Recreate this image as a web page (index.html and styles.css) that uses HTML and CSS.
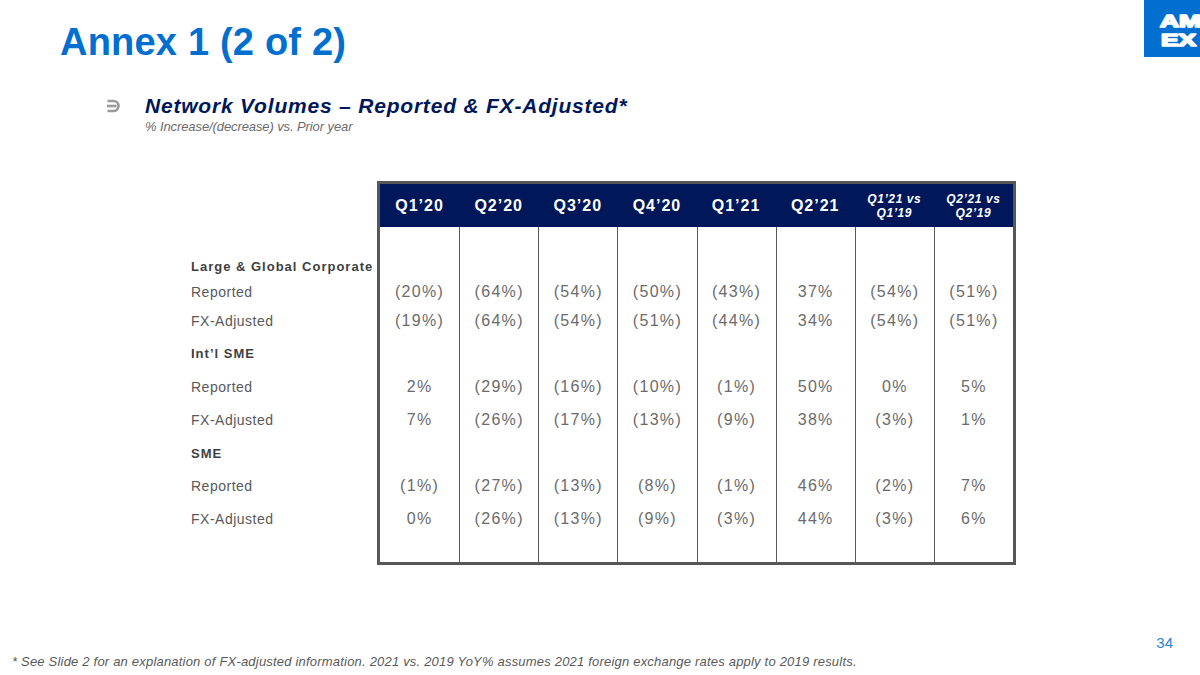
FILE: index.html
```html
<!DOCTYPE html>
<html>
<head>
<meta charset="utf-8">
<link rel="stylesheet" href="styles.css">
</head>
<body>
<div class="slide">
  <header class="top">
    <h1 class="title">Annex 1 (2 of 2)</h1>
    <div class="logo">
      <svg width="57" height="57" viewBox="0 0 57 57">
        <rect x="0" y="0" width="57" height="57" fill="#016fd0"/>
        <text class="logo-text"><tspan x="16" y="27" textLength="41" lengthAdjust="spacingAndGlyphs">AM</tspan><tspan x="17" y="46" textLength="35" lengthAdjust="spacingAndGlyphs">EX</tspan></text>
      </svg>
    </div>
  </header>

  <section class="intro">
    <svg class="bullet" width="15" height="14" viewBox="0 0 15 14">
      <path d="M1.5 2 H7.5 A5 5 0 0 1 7.5 12 H1.5" fill="none" stroke="#9a9a9a" stroke-width="2.6"/>
      <path d="M1 7 H10.5" stroke="#9a9a9a" stroke-width="2.6"/>
    </svg>
    <div class="intro-text">
      <h2 class="subtitle">Network Volumes – Reported &amp; FX-Adjusted*</h2>
      <p class="caption">% Increase/(decrease) vs. Prior year</p>
    </div>
  </section>

  <section class="data">
    <div class="labels">
      <div class="r r1 grp">Large &amp; Global Corporate</div>
      <div class="r r2">Reported</div>
      <div class="r r3">FX-Adjusted</div>
      <div class="r r4 grp">Int’l SME</div>
      <div class="r r5">Reported</div>
      <div class="r r6">FX-Adjusted</div>
      <div class="r r7 grp">SME</div>
      <div class="r r8">Reported</div>
      <div class="r r9">FX-Adjusted</div>
    </div>
    <div class="table">
      <div class="thead">
        <div class="th">Q1’20</div>
        <div class="th">Q2’20</div>
        <div class="th">Q3’20</div>
        <div class="th">Q4’20</div>
        <div class="th">Q1’21</div>
        <div class="th">Q2’21</div>
        <div class="th small">Q1’21 vs<br>Q1’19</div>
        <div class="th small">Q2’21 vs<br>Q2’19</div>
      </div>
      <div class="tbody">
        <div class="col">
          <div class="r r1"></div><div class="r r2">(20%)</div><div class="r r3">(19%)</div>
          <div class="r r4"></div><div class="r r5">2%</div><div class="r r6">7%</div>
          <div class="r r7"></div><div class="r r8">(1%)</div><div class="r r9">0%</div>
        </div>
        <div class="col">
          <div class="r r1"></div><div class="r r2">(64%)</div><div class="r r3">(64%)</div>
          <div class="r r4"></div><div class="r r5">(29%)</div><div class="r r6">(26%)</div>
          <div class="r r7"></div><div class="r r8">(27%)</div><div class="r r9">(26%)</div>
        </div>
        <div class="col">
          <div class="r r1"></div><div class="r r2">(54%)</div><div class="r r3">(54%)</div>
          <div class="r r4"></div><div class="r r5">(16%)</div><div class="r r6">(17%)</div>
          <div class="r r7"></div><div class="r r8">(13%)</div><div class="r r9">(13%)</div>
        </div>
        <div class="col">
          <div class="r r1"></div><div class="r r2">(50%)</div><div class="r r3">(51%)</div>
          <div class="r r4"></div><div class="r r5">(10%)</div><div class="r r6">(13%)</div>
          <div class="r r7"></div><div class="r r8">(8%)</div><div class="r r9">(9%)</div>
        </div>
        <div class="col">
          <div class="r r1"></div><div class="r r2">(43%)</div><div class="r r3">(44%)</div>
          <div class="r r4"></div><div class="r r5">(1%)</div><div class="r r6">(9%)</div>
          <div class="r r7"></div><div class="r r8">(1%)</div><div class="r r9">(3%)</div>
        </div>
        <div class="col">
          <div class="r r1"></div><div class="r r2">37%</div><div class="r r3">34%</div>
          <div class="r r4"></div><div class="r r5">50%</div><div class="r r6">38%</div>
          <div class="r r7"></div><div class="r r8">46%</div><div class="r r9">44%</div>
        </div>
        <div class="col">
          <div class="r r1"></div><div class="r r2">(54%)</div><div class="r r3">(54%)</div>
          <div class="r r4"></div><div class="r r5">0%</div><div class="r r6">(3%)</div>
          <div class="r r7"></div><div class="r r8">(2%)</div><div class="r r9">(3%)</div>
        </div>
        <div class="col">
          <div class="r r1"></div><div class="r r2">(51%)</div><div class="r r3">(51%)</div>
          <div class="r r4"></div><div class="r r5">5%</div><div class="r r6">1%</div>
          <div class="r r7"></div><div class="r r8">7%</div><div class="r r9">6%</div>
        </div>
      </div>
    </div>
  </section>

  <footer class="bottom">
    <div class="page-no">34</div>
    <p class="footnote">* See Slide 2 for an explanation of FX-adjusted information. 2021 vs. 2019 YoY% assumes 2021 foreign exchange rates apply to 2019 results.</p>
  </footer>
</div>
</body>
</html>
```

FILE: styles.css
```css
* { box-sizing: border-box; }
html, body { margin: 0; padding: 0; background: #ffffff; }
body { font-family: "Liberation Sans", Arial, sans-serif; }

.slide {
  width: 1200px;
  height: 675px;
  overflow: hidden;
  display: flex;
  flex-direction: column;
  background: #ffffff;
}

/* header */
.top {
  display: flex;
  justify-content: space-between;
  align-items: flex-start;
  height: 57px;
}
.title {
  margin: 0;
  padding: 19px 0 0 60px;
  font-size: 38px;
  line-height: 46px;
  font-weight: bold;
  color: #006fcf;
  letter-spacing: 0.2px;
}
.logo { width: 56px; height: 57px; overflow: hidden; }
.logo svg { display: block; }
.logo-text {
  font-family: "Liberation Sans", Arial, sans-serif;
  font-weight: bold;
  font-size: 16.5px;
  fill: #ffffff;
  stroke: #ffffff;
  stroke-width: 1.6px;
  stroke-linejoin: round;
}

/* intro */
.intro {
  display: flex;
  align-items: flex-start;
  margin-top: 37px;
  padding-left: 106px;
}
.bullet { margin-top: 5px; flex: none; }
.intro-text { margin-left: 24px; }
.subtitle {
  margin: 0;
  font-size: 21px;
  line-height: 24px;
  font-weight: bold;
  font-style: italic;
  color: #00175a;
  letter-spacing: 0.8px;
}
.caption {
  margin: 2px 0 0 0;
  font-size: 13px;
  line-height: 14px;
  font-style: italic;
  color: #6b6b6b;
  letter-spacing: -0.1px;
}

/* data */
.data {
  display: flex;
  align-items: flex-start;
  margin-top: 47px;
  padding-left: 191px;
}
.labels {
  width: 186px;
  margin-top: 72px;
  color: #595959;
  font-size: 14px;
  letter-spacing: 0.5px;
}
.labels .r { display: flex; align-items: center; white-space: nowrap; }
.labels .grp {
  font-weight: bold;
  font-size: 13px;
  letter-spacing: 1px;
  color: #3f3f3f;
}

.r1 { height: 26px; }
.r2 { height: 26px; }
.r3 { height: 32px; }
.r4 { height: 32px; }
.r5 { height: 36px; }
.r6 { height: 30px; }
.r7 { height: 36px; }
.r8 { height: 30px; }
.r9 { height: 36px; }

.table {
  width: 639px;
  border: 3px solid #575757;
}
.thead {
  display: grid;
  grid-template-columns: repeat(8, 1fr);
  height: 43px;
  background: #00175a;
}
.th {
  display: flex;
  align-items: center;
  justify-content: center;
  text-align: center;
  color: #ffffff;
  font-weight: bold;
  font-size: 16px;
  letter-spacing: 1px;
}
.th.small {
  font-style: italic;
  font-size: 12px;
  line-height: 14px;
  letter-spacing: 0.6px;
}
.tbody {
  display: grid;
  grid-template-columns: repeat(8, 1fr);
}
.col {
  padding-top: 26px;
  padding-bottom: 25px;
  border-left: 1px solid #595959;
}
.col:first-child { border-left: none; }
.col .r {
  display: flex;
  align-items: center;
  justify-content: center;
  color: #6b6b6b;
  font-size: 16px;
  letter-spacing: 1.3px;
}

/* footer */
.bottom {
  margin-top: auto;
  padding: 0 0 6px 12px;
}
.page-no {
  text-align: right;
  padding-right: 27px;
  font-size: 15px;
  line-height: 18px;
  color: #2f7fd3;
}
.footnote {
  margin: 3px 0 0 0;
  font-size: 13px;
  line-height: 14px;
  font-style: italic;
  color: #595959;
  letter-spacing: 0.2px;
}
```
